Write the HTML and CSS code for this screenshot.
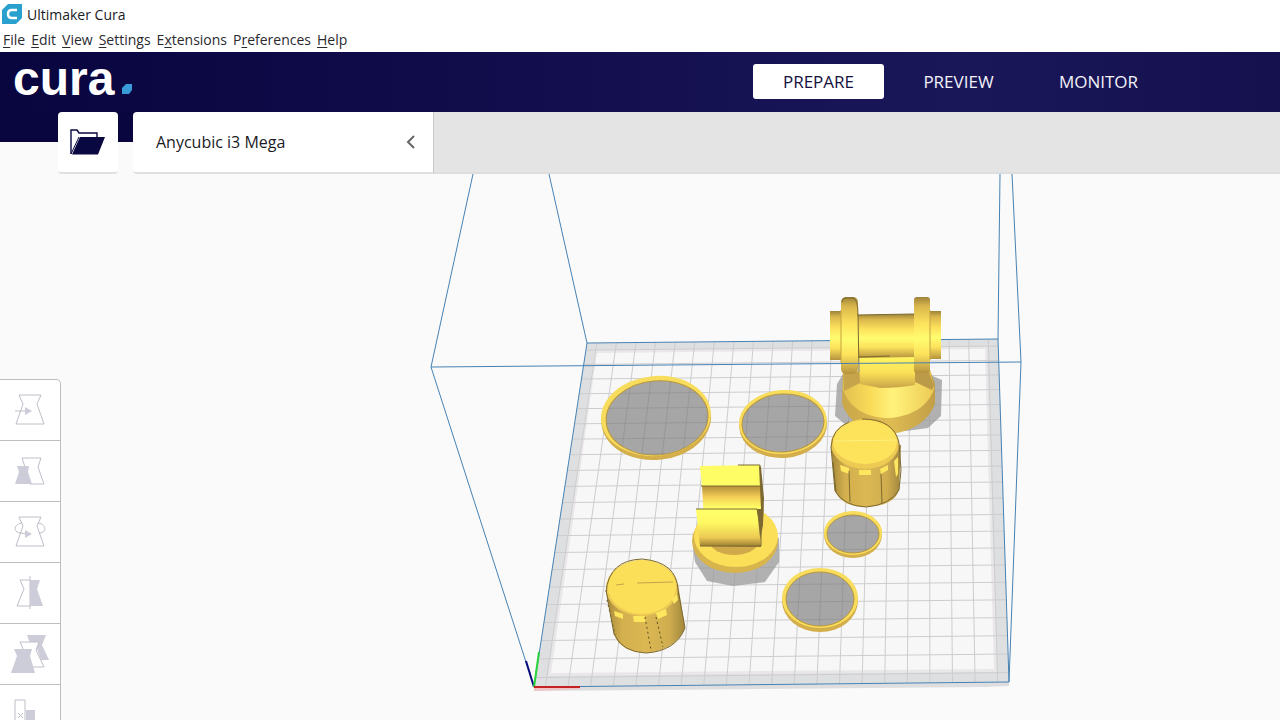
FILE: index.html
```html
<!DOCTYPE html>
<html lang="en">
<head>
  <meta charset="UTF-8" />
  <meta name="viewport" content="width=device-width, initial-scale=1.0" />
  <title>Ultimaker Cura</title>
  <link rel="stylesheet" href="styles.css">
</head>
<body>

<div class="titlebar">
  <svg class="app-icon" viewBox="0 0 20 20" aria-hidden="true">
    <path d="M6 0H20V14L14 20H0V6Z" fill="#2aa0cf" />
    <path d="M15 6H10Q6 6 6 10Q6 14 10 14H15" fill="none" stroke="#fff" stroke-width="2.5" />
  </svg>
  <span>Ultimaker Cura</span>
</div>

<nav class="menu">
  <a href="#"><u>F</u>ile</a>
  <a href="#"><u>E</u>dit</a>
  <a href="#"><u>V</u>iew</a>
  <a href="#"><u>S</u>ettings</a>
  <a href="#">E<u>x</u>tensions</a>
  <a href="#">P<u>r</u>eferences</a>
  <a href="#"><u>H</u>elp</a>
</nav>

<header class="header">
  <div class="logo">
    <span>cura</span>
    <svg class="logo-dot" viewBox="0 0 10 10" aria-hidden="true"><path d="M4 0H10V6L7 10H0V4Z" fill="#3a9bd9" /></svg>
  </div>
  <div class="tabs">
    <button class="tab active">PREPARE</button>
    <button class="tab">PREVIEW</button>
    <button class="tab">MONITOR</button>
  </div>
</header>

<div class="stage-bar">
  <button class="open-btn" aria-label="Open file">
    <svg viewBox="0 0 36 26">
      <path d="M1 25V1H7L9 4H27V8" fill="#fff" stroke="#0a0840" stroke-width="1.4" />
      <path d="M1 25L9 8" stroke="#0a0840" stroke-width="1" />
      <path d="M10 8H35L28 25.500H2Z" fill="#0a0840" />
    </svg>
  </button>
  <button class="printer">
    <span>Anycubic i3 Mega</span>
    <svg class="chevron" viewBox="0 0 10 14"><path d="M8 1L2 7L8 13" fill="none" stroke="#666" stroke-width="2" /></svg>
  </button>
  <div class="stage-fill"></div>
</div>

<main class="workspace">
  <svg class="scene" viewBox="0 174 1280 546" preserveAspectRatio="xMidYMin slice" role="img" aria-label="Build plate">
    <defs>
      <linearGradient id="cyl" x1="0" y1="0" x2="0" y2="1">
        <stop offset="0" stop-color="#9c8338" />
        <stop offset=".12" stop-color="#d9b64c" />
        <stop offset=".35" stop-color="#fde25c" />
        <stop offset=".55" stop-color="#fffc70" />
        <stop offset=".75" stop-color="#fde35c" />
        <stop offset="1" stop-color="#b5933f" />
      </linearGradient>
      <linearGradient id="neck" x1="0" y1="0" x2="0" y2="1">
        <stop offset="0" stop-color="#fff45f" />
        <stop offset=".5" stop-color="#fbe057" />
        <stop offset="1" stop-color="#c9a548" />
      </linearGradient>
      <linearGradient id="front" x1="0" y1="0" x2="0" y2="1">
        <stop offset="0" stop-color="#ffff6a" />
        <stop offset=".35" stop-color="#fff963" />
        <stop offset=".75" stop-color="#ecca54" />
        <stop offset="1" stop-color="#94782f" />
      </linearGradient>
      <linearGradient id="saddle" x1="0" y1="0" x2="0" y2="1">
        <stop offset="0" stop-color="#b38e3b" />
        <stop offset=".3" stop-color="#f2cd55" />
        <stop offset=".6" stop-color="#fffd66" />
      </linearGradient>
      <linearGradient id="side">
        <stop offset="0" stop-color="#a5883b" />
        <stop offset=".2" stop-color="#d3af4e" />
        <stop offset=".5" stop-color="#dcb853" />
        <stop offset=".8" stop-color="#cfad4f" />
        <stop offset="1" stop-color="#a1863c" />
      </linearGradient>
      <linearGradient id="rim">
        <stop offset="0" stop-color="#c9a648" />
        <stop offset=".5" stop-color="#e0bd53" />
        <stop offset="1" stop-color="#c29f47" />
      </linearGradient>
      <linearGradient id="cone">
        <stop offset="0" stop-color="#e3c050" />
        <stop offset=".3" stop-color="#fadb58" />
        <stop offset=".55" stop-color="#fff37c" />
        <stop offset="1" stop-color="#ecca54" />
      </linearGradient>
    </defs>

    <!-- build plate -->
    <path d="M534 687L1009 682V686L985 687L534 691Z" fill="#dedee0" />
    <path d="M534 687H580V689L534 691Z" fill="#f0c4c4" />
    <path d="M587 343L998 339L1009 682L534 687Z" fill="#dedfe1" />
    <path d="M595 350L987 346L997 672L548 676Z" fill="#e9e7e8" />
    <path d="M597 353L985 349L994 669L551 673Z" fill="#f7f7f7" />
    <g id="grid" class="grid"></g>

    <!-- print volume -->
    <path class="volume" d="M473 174L431 367L534 687M549 174L587 343L534 687L1009 682L998 339L587 343M1000 174L998 339M1012 174L1021 362L1009 682" />
    <path d="M534 687L526 661" stroke="#0a0a7c" stroke-width="2" />
    <path d="M534 687L539 652" stroke="#2bd43c" stroke-width="2" />
    <path d="M534 687H580" stroke="#c42222" stroke-width="2" />

    <!-- flat rings -->
    <g class="ring" transform="rotate(-5 656 417)">
      <ellipse class="ring-edge" cx="656" cy="419" rx="55" ry="41" />
      <ellipse class="ring-top" cx="656" cy="416" rx="55" ry="40" />
      <ellipse class="ring-inner" cx="657" cy="418" rx="51" ry="37" />
    </g>
    <g class="ring" transform="rotate(-4 783 423)">
      <ellipse class="ring-edge" cx="783" cy="425" rx="44" ry="33" />
      <ellipse class="ring-top" cx="783" cy="422" rx="44" ry="32" />
      <ellipse class="ring-inner" cx="783" cy="423" rx="41" ry="29" />
    </g>
    <g class="ring">
      <ellipse class="ring-edge" cx="853" cy="535" rx="29" ry="23" />
      <ellipse class="ring-top" cx="853" cy="533" rx="29" ry="22" />
      <ellipse class="ring-inner" cx="853" cy="534" rx="26" ry="19" />
    </g>
    <g class="ring">
      <ellipse class="ring-edge" cx="820" cy="601" rx="38" ry="31" />
      <ellipse class="ring-top" cx="820" cy="598" rx="38" ry="30" />
      <ellipse class="ring-inner" cx="820" cy="599" rx="34" ry="27" />
    </g>
    <g id="ring-grid" class="ring-grid"></g>

    <!-- spool holder -->
    <path class="shade" d="M837 384L843 374H928L942 380L941 416L928 428L906 431L846 425L835 416Z" />
    <path d="M843 372L842 403C848 423 868 434 890 434C912 432 930 420 935 403V384L930 370Z" fill="url(#rim)" />
    <path d="M844 372L843 390C850 409 868 418 888 418C910 417 928 407 934 389L930 370Z" fill="url(#cone)" />
    <path d="M844 372V391L860 383V372Z" fill="#c5a44b" />
    <path d="M914 372L915 382L932 390L934 386L929 372Z" fill="#bb9b48" />
    <path d="M859 357H915V385Q900 388 880 388L860 384Z" fill="url(#neck)" />
    <rect x="830" y="311" width="12" height="49" fill="url(#cyl)" />
    <rect x="929" y="311" width="12" height="48" fill="url(#cyl)" />
    <path d="M856 315L914 314V357L857 358Z" fill="url(#cyl)" />
    <rect x="841" y="297" width="17" height="77" rx="5" fill="url(#cyl)" />
    <rect x="914" y="297" width="16" height="76" rx="3" fill="url(#cyl)" />
    <path d="M842 302Q842 298 846 298H853Q858 299 858 315L859 372M857 315L914 314M859 357L890 356" class="edge" />
    <path d="M841 310V364M930 310V360" stroke="#c6a443" fill="none" />

    <!-- knob, back -->
    <path d="M831 445L835 491Q842 507 866 507Q894 506 899 490L901 445Z" fill="url(#side)" />
    <ellipse cx="865" cy="444" rx="34" ry="25" fill="#ecca54" />
    <path d="M840 465L849 468V474L841 471ZM859 470H871V475H859ZM880 469L888 465V470L881 474ZM894 461L898 457V474L896 477Z" fill="#ffe65f" />
    <path class="seam solid-seam" d="M849 471L850 502M881 474L882 503M833 462L836 492" />
    <ellipse cx="865" cy="442" rx="32" ry="22" fill="#fde25c" />
    <path d="M834 441L899 440" stroke="#fff07c" />
    <path class="edge" d="M831 447Q832 429 849 422M862 419Q894 419 899 443L901 470L899 490Q890 505 866 507Q844 506 835 491L831 447" />

    <!-- clip -->
    <path class="shade" d="M693 548L695 562L707 581L733 586L765 582L779 562V538Z" />
    <ellipse cx="735" cy="541" rx="43" ry="32" fill="#d8b44d" />
    <ellipse cx="736" cy="536" rx="42" ry="31" fill="#fcdf59" />
    <ellipse cx="734" cy="542" rx="24" ry="13" fill="#cfa94a" />
    <path d="M700 466L760 465L761 486H702Z" fill="#fffd65" />
    <path d="M702 486H761L763 522L704 520Z" fill="url(#saddle)" />
    <path d="M759 466L761 467L764 498L763 525L759 546L757 509H761Z" fill="#7d6833" />
    <path d="M696 509H757L761 547L700 546Z" fill="url(#front)" />
    <path class="edge" d="M738 465H760L763 510L762 526M701 486H760M696 509H757L761 530V546H700" />

    <!-- knob, front -->
    <path d="M606 590L614 634Q620 652 646 653Q676 650 685 628L678 584Z" fill="url(#side)" />
    <ellipse cx="642" cy="588" rx="36" ry="28" fill="#ecca54" />
    <path d="M614 611L623 614V619L615 616ZM633 616H645V622H634ZM656 613L666 609L667 615L658 619ZM672 599L677 594L678 600L674 604Z" fill="#ffe65f" />
    <path class="seam" d="M645 617L651 650M656 617L663 647M607 600L615 635" />
    <ellipse cx="642" cy="587" rx="34" ry="27" fill="#fbdf59" />
    <path d="M616 585L624 584M637 583L673 582" stroke="#c4a54b" />
    <path class="edge" d="M606 592Q609 560 642 559Q677 562 678 590L685 628Q676 651 646 653Q622 652 614 634L606 590" />

    <path class="volume" d="M431 367L1021 362" />
  </svg>

  <div class="toolbar">
    <button aria-label="Move">
      <svg viewBox="0 0 60 60">
        <path class="line" d="M19 15H41L37 24L44 44H16L23 24ZM15 31H26" />
        <path class="solid" d="M25 27L32 31L25 35Z" />
      </svg>
    </button>
    <button aria-label="Scale">
      <svg viewBox="0 0 60 60">
        <path class="line" d="M22 17H41L38 26L44 43H30L25 26Z" />
        <path class="solid" d="M17 25H29L28 31L32 43H15L19 31Z" />
      </svg>
    </button>
    <button aria-label="Rotate">
      <svg viewBox="0 0 60 60">
        <path class="line" d="M19 15H41L37 24L44 44H16L23 24ZM22 21C13 22 13 31 21 31L26 32M38 21C47 22 47 31 39 31" />
        <path class="solid" d="M25 28L32 32L25 36Z" />
      </svg>
    </button>
    <button aria-label="Mirror">
      <svg viewBox="0 0 60 60">
        <path class="line" d="M30 17H20L24 26L17 43H30M30 13V46" />
        <path class="solid" d="M30 17H40L37 26L43 43H30Z" />
      </svg>
    </button>
    <button aria-label="Per model settings">
      <svg viewBox="0 0 60 60">
        <path class="solid" d="M27 11H46L42 21L49 36H41L36 22L29 17Z" />
        <path class="line white" d="M20 18H39L36 26L44 43H30L24 27Z" />
        <path class="solid" d="M14 25H32L30 32L35 49H11L17 32Z" />
      </svg>
    </button>
    <button aria-label="Support blocker">
      <svg viewBox="0 0 60 60">
        <path class="line" d="M15 15H25V45H15ZM18 28L23 33M23 28L18 33" />
        <path class="solid" d="M26 25H35V45H26Z" />
      </svg>
    </button>
  </div>
</main>

<script src="script.js"></script>
</body>
</html>
```
FILE: styles.css
```css
* {
  box-sizing: border-box;
}

body {
  margin: 0;
  height: 100vh;
  display: flex;
  flex-direction: column;
  overflow: hidden;
  background: #fafafa;
  color: #1b1b1f;
  font-family: "Open Sans", sans-serif;
}

button {
  border: none;
  padding: 0;
  font: inherit;
  cursor: pointer;
}

.titlebar {
  display: flex;
  align-items: center;
  gap: 5px;
  height: 28px;
  padding: 0 2px;
  background: #fff;
  font-size: 14px;
}

.app-icon {
  width: 20px;
  height: 20px;
}

.menu {
  display: flex;
  gap: 6px;
  height: 24px;
  padding: 0 3px;
  background: #fff;
  font-size: 14px;
  line-height: 24px;
}

.menu a {
  color: #2a2a2e;
  text-decoration: none;
}

.menu u {
  text-underline-offset: 2px;
}

.header {
  display: flex;
  justify-content: space-between;
  height: 60px;
  padding: 0 116px 0 13px;
  background: linear-gradient(90deg, #08053f, #100c4a 33%, #1a1759 75%, #15114f);
}

.logo {
  display: flex;
  align-items: flex-end;
  gap: 8px;
  height: 42px;
  color: #fff;
  font-family: "Liberation Sans", sans-serif;
  font-size: 48px;
  font-weight: 700;
  line-height: 30px;
}

.logo-dot {
  width: 10px;
  height: 10px;
}

.tabs {
  display: flex;
  align-items: center;
  gap: 9px;
  height: 59px;
}

.tab {
  width: 131px;
  height: 35px;
  border-radius: 3px;
  background: transparent;
  color: #f2f2fa;
  font-size: 17px;
}

.tab.active {
  background: #fff;
  color: #15123f;
}

.stage-bar {
  display: flex;
  height: 62px;
  padding-left: 58px;
  background: linear-gradient(#09063f, #09063f) top / 100% 30px no-repeat #fafafa;
}

.open-btn,
.printer {
  display: flex;
  align-items: center;
  height: 62px;
  background: #fff;
  border-bottom: 2px solid #e0e0e0;
}

.open-btn {
  justify-content: center;
  width: 60px;
  margin-right: 15px;
  border-radius: 4px;
}

.open-btn svg {
  width: 36px;
  height: 26px;
}

.printer {
  justify-content: space-between;
  width: 300px;
  padding: 0 17px 0 23px;
  border-radius: 4px 0 0 4px;
  color: #1b1b1f;
  font-size: 16px;
}

.chevron {
  width: 10px;
  height: 14px;
}

.stage-fill {
  flex: 1;
  background: #e4e4e4;
  border-left: 1px solid #c8c8c8;
  border-bottom: 2px solid #dedede;
}

.workspace {
  flex: 1;
  min-height: 0;
  display: grid;
  grid-template: minmax(0, 1fr) / minmax(0, 1fr);
}

.scene,
.toolbar {
  grid-area: 1 / 1;
}

.scene {
  width: 100%;
  height: 100%;
}

.toolbar {
  justify-self: start;
  align-self: start;
  margin-top: 205px;
  width: 61px;
  background: #fff;
  border: 1px solid #bdbdc2;
  border-left: none;
  border-radius: 0 5px 5px 0;
}

.toolbar button {
  display: block;
  width: 60px;
  height: 61px;
  background: transparent;
  border-bottom: 1px solid #bdbdc2;
}

.toolbar svg {
  display: block;
  width: 60px;
  height: 60px;
}

.line {
  fill: none;
  stroke: #bfbec9;
}

.white {
  fill: #fff;
}

.solid {
  fill: #cdccd9;
}

.grid {
  stroke: #cdcdcf;
}

.ring-grid {
  stroke: #8c8c8c;
  stroke-opacity: 0.5;
}

.volume {
  fill: none;
  stroke: #4682b4;
}

.ring-edge {
  fill: #d3ae4a;
}

.ring-top {
  fill: #f8dc5c;
}

.ring-inner {
  fill: #a6a6a6;
  stroke: #b8963f;
}

.shade {
  fill: #999;
  fill-opacity: 0.75;
}

.edge {
  fill: none;
  stroke: #7d6a30;
}

.seam {
  fill: none;
  stroke: #5b4c22;
  stroke-dasharray: 2 3;
}

.solid-seam {
  stroke: #7d6a30;
  stroke-dasharray: none;
}
```
FILE: script.js
```js
// Plate corners: back left, back right, front right, front left
const [a, b, c, d] = [[587, 343], [998, 339], [1009, 682], [534, 687]];
const cells = 21;

// Perspective mapping from the unit square to the plate
const dx1 = b[0] - c[0], dx2 = d[0] - c[0], sx = a[0] - b[0] + c[0] - d[0];
const dy1 = b[1] - c[1], dy2 = d[1] - c[1], sy = a[1] - b[1] + c[1] - d[1];
const det = dx1 * dy2 - dx2 * dy1;
const g = (sx * dy2 - dx2 * sy) / det;
const h = (dx1 * sy - sx * dy1) / det;

function project(u, v) {
  const w = g * u + h * v + 1;
  return [0, 1].map(i =>
    ((b[i] - a[i] + g * b[i]) * u + (d[i] - a[i] + h * d[i]) * v + a[i]) / w
  );
}

function gridPath() {
  let path = '';
  for (let i = 0; i < cells; i++) {
    const t = (i + 0.5) / cells;
    path += `M${project(t, 0)}L${project(t, 1)}M${project(0, t)}L${project(1, t)}`;
  }
  return path;
}

const svgNS = 'http://www.w3.org/2000/svg';

function addPath(parent, data) {
  const path = document.createElementNS(svgNS, 'path');
  path.setAttribute('d', data);
  parent.appendChild(path);
  return path;
}

addPath(document.getElementById('grid'), gridPath());

// The grid shows faintly through the ring shadows
const clip = document.createElementNS(svgNS, 'clipPath');
clip.id = 'rings';
document.querySelectorAll('.ring').forEach(ring => {
  const inner = ring.querySelector('.ring-inner').cloneNode();
  if (ring.hasAttribute('transform')) {
    inner.setAttribute('transform', ring.getAttribute('transform'));
  }
  clip.appendChild(inner);
});
document.querySelector('.scene defs').appendChild(clip);
addPath(document.getElementById('ring-grid'), gridPath()).setAttribute('clip-path', 'url(#rings)');
```
